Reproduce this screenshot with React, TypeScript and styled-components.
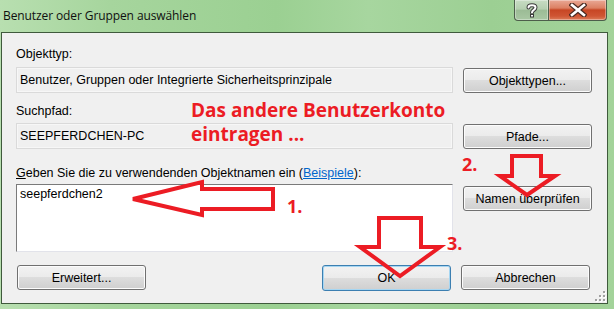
import React from "react";
import styled, { createGlobalStyle } from "styled-components";

const Global = createGlobalStyle`
  html, body { margin: 0; padding: 0; background: #9fd196; }
  body { width: 614px; height: 309px; overflow: hidden; }
  * { box-sizing: border-box; }
`;

const Window = styled.div`
  position: relative;
  width: 614px;
  height: 309px;
  display: flex;
  flex-direction: column;
  background: linear-gradient(90deg, #b8dfb0 0%, #a6d59d 18%, #9bd092 45%, #a7d69f 60%, #9ccf93 80%, #a3d39a 100%);
  overflow: hidden;
`;

const TitleBar = styled.div`
  height: 32px;
  display: flex;
  align-items: flex-start;
  justify-content: space-between;
  padding: 0 7px 0 3px;
  flex: none;
`;

const Title = styled.div`
  font-family: "Open Sans", "Noto Sans", sans-serif;
  font-size: 12px;
  color: #101010;
  margin-top: 7px;
  letter-spacing: -0.1px;
`;

const Caption = styled.div`
  display: flex;
  height: 21px;
`;

const CaptionBtn = styled.div<{ $w: number; $close?: boolean }>`
  width: ${(p) => p.$w}px;
  height: 21px;
  display: flex;
  align-items: center;
  justify-content: center;
  border: 1px solid #4d5e4b;
  border-top: none;
  ${(p) =>
    p.$close
      ? `border-radius: 0 0 4px 0; border-left: none;
         background: linear-gradient(180deg, #e9a895 0%, #dc8063 40%, #c74624 50%, #cf5533 80%, #dc7c58 100%);`
      : `border-radius: 0 0 0 4px;
         background: linear-gradient(180deg, #c8dcc4 0%, #b5cfb0 45%, #9cbc96 52%, #a9c7a3 100%);`}
  box-shadow: inset 0 0 0 1px rgba(255, 255, 255, 0.35);
`;

const Client = styled.div`
  flex: 1;
  margin: 0 6px 5px 1px;
  border: 1px solid #3f5a3c;
  background: #f0f0f0;
  padding: 14px 0 0 14px;
  font-family: "Liberation Sans", Arial, sans-serif;
  font-size: 12.5px;
  color: #000;
  display: flex;
  flex-direction: column;
  position: relative;
`;

const Label = styled.div<{ $mt: number }>`
  height: 14px;
  line-height: 14px;
  margin-top: ${(p) => p.$mt}px;
  white-space: nowrap;
`;

const Row = styled.div<{ $mt: number }>`
  display: flex;
  align-items: flex-start;
  gap: 10px;
  margin-top: ${(p) => p.$mt}px;
`;

const Field = styled.div`
  width: 437px;
  height: 26px;
  border: 1px solid #dadada;
  box-shadow: inset 0 0 0 1px #f7f7f7;
  padding: 5px 0 0 3px;
  line-height: 14px;
  white-space: nowrap;
`;

const TextArea = styled.div`
  width: 437px;
  height: 68px;
  background: #fff;
  border: 1px solid #e2e3ea;
  border-top-color: #7a7a7a;
  border-left-color: #7a7a7a;
  padding: 2px 0 0 3px;
  line-height: 14px;
`;

const Button = styled.div<{ $default?: boolean; $mt?: number }>`
  width: 129px;
  height: ${(p) => (p.$default ? 26 : 25)}px;
  margin-top: ${(p) => p.$mt ?? 0}px;
  border: 1px solid ${(p) => (p.$default ? "#3c7fb1" : "#707070")};
  border-radius: 3px;
  background: linear-gradient(180deg, #f2f2f2 0%, #ebebeb 49%, #dddddd 50%, #cfcfcf 100%);
  box-shadow: inset 0 0 0 1px ${(p) => (p.$default ? "#a6d6f2" : "#fcfcfc")};
  display: flex;
  align-items: center;
  justify-content: center;
  line-height: 14px;
  flex: none;
  white-space: nowrap;
`;

const ButtonRow = styled.div`
  display: flex;
  margin-top: 13px;
  padding-left: 1px;
`;

const Spacer = styled.div`
  flex: none;
  width: 176px;
`;

const Gap = styled.div`
  flex: none;
  width: 10px;
`;

const Link = styled.span`
  color: #0066cc;
  text-decoration: underline;
`;

const Accel = styled.span`
  text-decoration: underline;
`;

const Grip = styled.svg`
  position: absolute;
  right: 1px;
  bottom: 1px;
`;

const Overlay = styled.svg`
  position: absolute;
  left: 0;
  top: 0;
  pointer-events: none;
`;

const Note = styled.div<{ $x: number; $y: number; $size: number }>`
  position: absolute;
  left: ${(p) => p.$x}px;
  top: ${(p) => p.$y}px;
  font-family: "Open Sans", "Noto Sans", sans-serif;
  font-weight: 700;
  font-size: ${(p) => p.$size}px;
  line-height: 1;
  color: #ec1c24;
  white-space: nowrap;
`;

const arrows = [
  "133,199 202,182 202,189 273,189 273,209 202,209 202,215",
  "512,156 541,156 541,176 555,176 527,195 500,176 512,176",
  "379,218 421,218 421,247 440,247 400,276 360,247 379,247",
];

export default function App() {
  return (
    <>
      <Global />
      <Window>
        <TitleBar>
          <Title>Benutzer oder Gruppen auswählen</Title>
          <Caption>
            <CaptionBtn $w={35}>
              <svg width="14" height="16" viewBox="0 0 14 16">
                <path
                  d="M3.5 5.5 C3.5 2.5 10.5 2.5 10.5 5.5 C10.5 8 7 8 7 10.5"
                  fill="none"
                  stroke="#3a3a3a"
                  strokeWidth="4"
                  strokeLinecap="round"
                />
                <path
                  d="M3.5 5.5 C3.5 2.5 10.5 2.5 10.5 5.5 C10.5 8 7 8 7 10.5"
                  fill="none"
                  stroke="#fff"
                  strokeWidth="2"
                  strokeLinecap="round"
                />
                <rect x="5" y="12" width="4" height="3.5" fill="#3a3a3a" />
                <rect x="6" y="13" width="2" height="1.5" fill="#fff" />
              </svg>
            </CaptionBtn>
            <CaptionBtn $w={58} $close>
              <svg width="18" height="14" viewBox="0 0 18 14">
                <path d="M3 2 L15 12 M15 2 L3 12" stroke="#4a2a22" strokeWidth="5" strokeLinecap="square" />
                <path d="M3 2 L15 12 M15 2 L3 12" stroke="#fff" strokeWidth="2.6" strokeLinecap="square" />
              </svg>
            </CaptionBtn>
          </Caption>
        </TitleBar>
        <Client>
          <Label $mt={0}>Objekttyp:</Label>
          <Row $mt={6}>
            <Field>Benutzer, Gruppen oder Integrierte Sicherheitsprinzipale</Field>
            <Button $mt={1}>Objekttypen...</Button>
          </Row>
          <Label $mt={11}>Suchpfad:</Label>
          <Row $mt={5}>
            <Field>SEEPFERDCHEN-PC</Field>
            <Button $mt={1}>Pfade...</Button>
          </Row>
          <Label $mt={17}>
            <Accel>G</Accel>eben Sie die zu verwendenden Objektnamen ein (<Link>Beispiele</Link>):
          </Label>
          <Row $mt={4}>
            <TextArea>seepferdchen2</TextArea>
            <Button $mt={2}>Namen überprüfen</Button>
          </Row>
          <ButtonRow>
            <Button $default={false}>Erweitert...</Button>
            <Spacer />
            <Button $default>OK</Button>
            <Gap />
            <Button>Abbrechen</Button>
          </ButtonRow>
          <Grip width="11" height="11" viewBox="0 0 11 11">
            {[
              [8, 0],
              [4, 4],
              [8, 4],
              [0, 8],
              [4, 8],
              [8, 8],
            ].map(([x, y]) => (
              <g key={`${x}-${y}`}>
                <rect x={x + 1} y={y + 1} width="2" height="2" fill="#fff" />
                <rect x={x} y={y} width="2" height="2" fill="#a0a0a0" />
              </g>
            ))}
          </Grip>
        </Client>
        <Note $x={191} $y={101} $size={19}>Das andere Benutzerkonto</Note>
        <Note $x={191} $y={125} $size={19}>eintragen ...</Note>
        <Note $x={287} $y={197} $size={18}>1.</Note>
        <Note $x={462} $y={155} $size={18}>2.</Note>
        <Note $x={447} $y={234} $size={18}>3.</Note>
        <Overlay width="614" height="309" viewBox="0 0 614 309">
          {arrows.map((pts) => (
            <polygon key={pts} points={pts} fill="none" stroke="#ec1c24" strokeWidth="4" strokeLinejoin="miter" />
          ))}
        </Overlay>
      </Window>
    </>
  );
}
